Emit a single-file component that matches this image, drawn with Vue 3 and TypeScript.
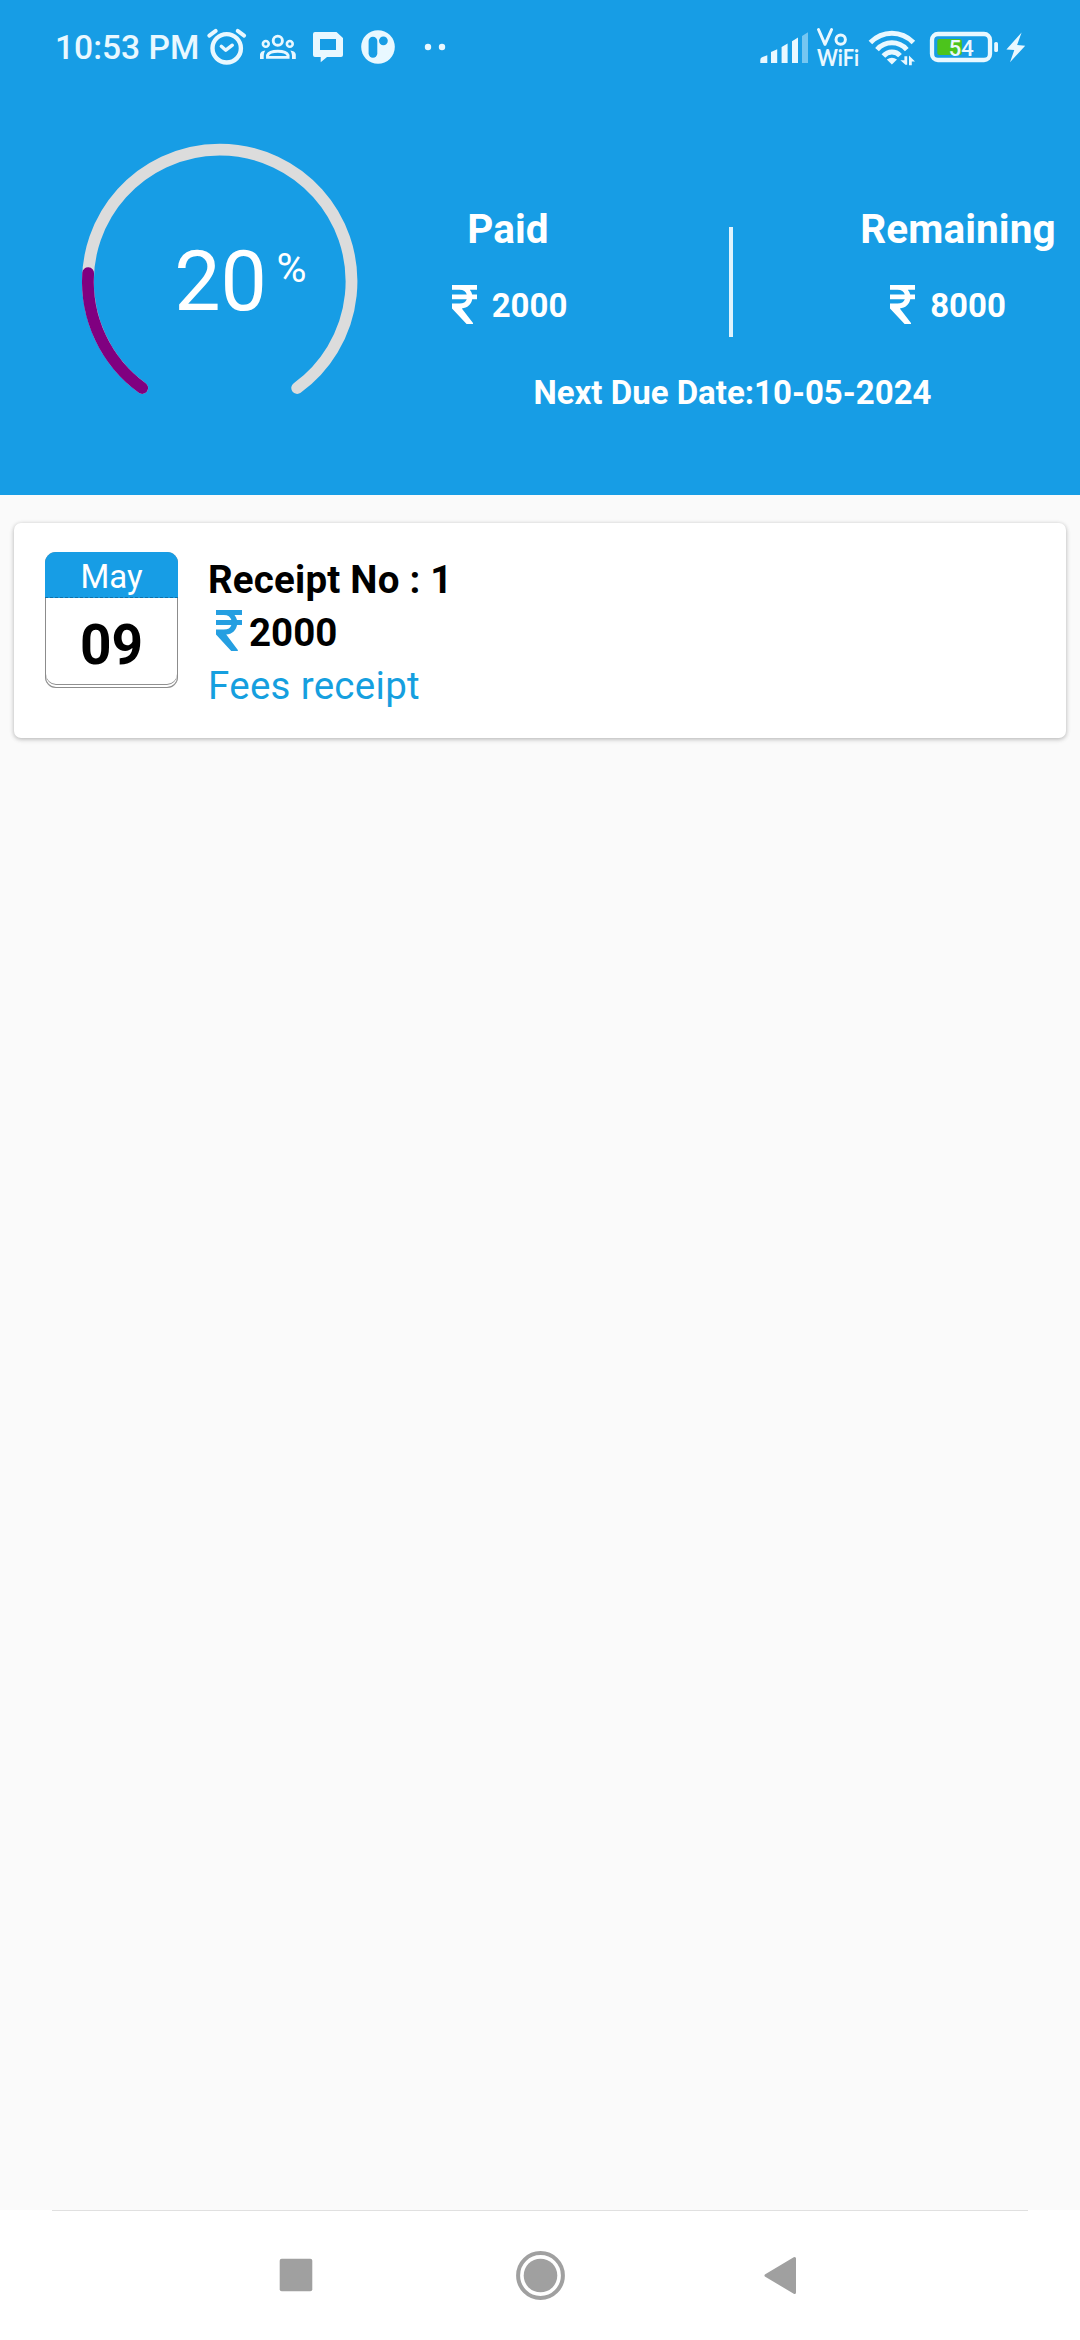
<script setup lang="ts">
interface Receipt {
  month: string
  day: string
  no: number
  amount: number
  label: string
}

const percent = 20
const nextDue = '10-05-2024'
const stats = [
  { key: 'paid', label: 'Paid', amount: 2000 },
  { key: 'remaining', label: 'Remaining', amount: 8000 },
]
const receipts: Receipt[] = [
  { month: 'May', day: '09', no: 1, amount: 2000, label: 'Fees receipt' },
]

const rupee =
  'M0 0H25V4.7H17.8C19 6.2 19.8 7.8 20.2 9.6H25V14.2H20.2C19.3 19.5 15.5 22.7 9.8 23.4L21 38V39H14.6L0 23.4V18.6H7.5C11.5 18.6 13.9 17 14.8 14.2H0V9.6H14.8C13.9 6.5 11.5 4.7 7.5 4.7H0Z'

// The gauge is open at the bottom: a 288 degree sweep starting at 126 degrees.
const gauge = { cx: 143.7, cy: 145.4, r: 131.8, start: 126, sweep: 288 }

function arc(sweep: number): string {
  const at = (deg: number): string => {
    const a = (deg * Math.PI) / 180
    return `${(gauge.cx + gauge.r * Math.cos(a)).toFixed(2)} ${(gauge.cy + gauge.r * Math.sin(a)).toFixed(2)}`
  }
  return `M${at(gauge.start)}A${gauge.r} ${gauge.r} 0 ${sweep > 180 ? 1 : 0} 1 ${at(gauge.start + sweep)}`
}
</script>

<template>
  <div class="screen">
    <header class="header">
      <div class="status">
        <span class="clock">10:53 PM</span>
        <svg class="left-icons" width="250" height="50" viewBox="204 22 250 50">
          <g fill="none" stroke="#e9f8ff" stroke-linecap="round" stroke-linejoin="round">
            <circle cx="226.7" cy="48.3" r="14.2" stroke-width="4.4" />
            <path d="M209.3 35.6L215.7 30.9M237.7 30.9L244.1 35.6" stroke-width="4" />
            <path d="M221.3 46.3L225.8 50.2L232.3 45.2" stroke-width="3.4" />
          </g>
          <g fill="none" stroke="#e9f8ff" stroke-width="2.9">
            <circle cx="277.8" cy="40.7" r="4.6" />
            <circle cx="265.8" cy="43.9" r="2.9" stroke-width="2.6" />
            <circle cx="289.8" cy="43.9" r="2.9" stroke-width="2.6" />
            <path d="M267.5 57.4V55.4Q269.2 51.2 277.8 51.2T288.1 55.4V57.4Z" />
          </g>
          <path d="M260 59V54.5Q260.4 50.8 265.3 50.4Q263.4 53 263.7 59ZM295.8 59V54.5Q295.4 50.8 290.3 50.4Q292.4 53 292 59Z" fill="#e9f8ff" />
          <path fill="#e9f8ff" fill-rule="evenodd" d="M315 32H336.5L343 38V55Q343 57 341 57H327L320.7 62.3V57H315Q313 57 313 55V34Q313 32 315 32ZM320 39V50H336V39Z" />
          <circle cx="378" cy="47" r="16.8" fill="#e9f8ff" />
          <rect x="368.6" y="36.7" width="8.7" height="21" rx="4.35" fill="#179de5" />
          <circle cx="383.4" cy="40.8" r="4.4" fill="#179de5" />
          <circle cx="428" cy="47" r="3.2" fill="#e9f8ff" />
          <circle cx="442" cy="47" r="3.2" fill="#e9f8ff" />
        </svg>
        <svg class="right-icons" width="270" height="50" viewBox="758 22 270 50">
          <g fill="#e9f8ff">
            <path d="M760.3 60Q760.3 57.7 762.5 57L767.3 55.2V63H760.3ZM771 52L777.2 49.3V63H771ZM781.6 47L787.6 43.5V63H781.6ZM792 41.3L798 37.5V63H792Z" />
            <path d="M802 36L808 32.3V63H802Z" opacity=".45" />
          </g>
          <g fill="none" stroke="#e9f8ff" stroke-width="3" stroke-linecap="round" stroke-linejoin="round">
            <circle cx="840.7" cy="39.6" r="4.7" />
            <path d="M818.5 29.5L825 44.3L831.6 29.5" />
          </g>
          <text class="wifi-text" x="817" y="66" textLength="42" lengthAdjust="spacingAndGlyphs">WiFi</text>
          <g fill="none" stroke="#e9f8ff" stroke-width="5">
            <path d="M870.4 42.6Q879.5 33.3 891.9 33.3T913.4 42.6" />
            <path d="M877 49.6Q883.2 42.8 891.9 42.8T906.8 49.6" />
            <path d="M883.4 56Q887 52 891.9 52T900 55.6" />
          </g>
          <path d="M886.8 59.6Q891.9 55.8 897 59.6L891.9 64.4Z" fill="#e9f8ff" />
          <path d="M900.4 60.2H904.4V56.2H907.2V64.8H905.4ZM909 55.6V65.2H911.8V61.4H915Z" fill="#e9f8ff" />
          <rect x="932" y="34" width="58" height="26" rx="6" fill="none" stroke="#e9f8ff" stroke-width="4.3" />
          <rect x="937.3" y="39" width="24.5" height="16" rx="2" fill="#4cc41c" />
          <text class="battery-text" x="961.3" y="55.6" text-anchor="middle">54</text>
          <rect x="994.2" y="42" width="3.8" height="10" rx="1.6" fill="#e9f8ff" />
          <path d="M1021.6 32.4L1006.4 49.6L1014.3 50L1010 62.2L1025.2 45.8L1017.1 45Z" fill="#e9f8ff" />
        </svg>
      </div>

      <div class="summary">
        <svg class="gauge" width="288" height="270" viewBox="0 0 288 270">
          <g fill="none" stroke-linecap="round" stroke-width="11.8">
            <path :d="arc(gauge.sweep)" stroke="#dcdcdc" />
            <path :d="arc((gauge.sweep * percent) / 100)" stroke="#800080" />
          </g>
          <text class="gauge-value" x="98.2" y="174">{{ percent }}</text>
          <text class="gauge-unit" x="200.6" y="145.6">%</text>
        </svg>
        <div class="figures">
          <div class="stats">
            <div v-for="s in stats" :key="s.key" class="stat" :class="s.key">
              <span class="stat-label">{{ s.label }}</span>
              <span class="stat-amount">
                <svg width="25" height="39" viewBox="0 0 25 39"><path :d="rupee" fill="#fff" /></svg>
                <span>{{ s.amount }}</span>
              </span>
            </div>
          </div>
          <div class="due">Next Due Date:{{ nextDue }}</div>
        </div>
      </div>
    </header>

    <main class="content">
      <article v-for="r in receipts" :key="r.no" class="card">
        <div class="calendar">
          <div class="month">{{ r.month }}</div>
          <div class="day">{{ r.day }}</div>
        </div>
        <div class="details">
          <div class="title">Receipt No : {{ r.no }}</div>
          <div class="amount">
            <svg width="26" height="41" viewBox="0 0 25 39" preserveAspectRatio="none">
              <path :d="rupee" fill="#259fe1" />
            </svg>
            <span>{{ r.amount }}</span>
          </div>
          <div class="label">{{ r.label }}</div>
        </div>
      </article>
    </main>

    <nav class="nav">
      <div class="nav-line"></div>
      <div class="nav-buttons">
        <svg width="60" height="60" viewBox="0 0 60 60">
          <rect x="13.7" y="13.7" width="32.6" height="32.6" rx="2" fill="#a0a0a0" />
        </svg>
        <svg width="60" height="60" viewBox="0 0 60 60">
          <circle cx="30.5" cy="30.5" r="22.4" fill="none" stroke="#a0a0a0" stroke-width="4" />
          <circle cx="30.5" cy="30.5" r="16.8" fill="#a0a0a0" />
        </svg>
        <svg width="60" height="60" viewBox="0 0 60 60">
          <path d="M12 30.5L40.5 13.6V47.4Z" fill="#a0a0a0" stroke="#a0a0a0" stroke-width="3" stroke-linejoin="round" />
        </svg>
      </div>
    </nav>
  </div>
</template>

<style>
body {
  margin: 0;
  background: #fafafa;
}
</style>

<style scoped>
.screen {
  display: flex;
  flex-direction: column;
  width: 1080px;
  height: 2340px;
  overflow: hidden;
  background: #fafafa;
  font-family: Roboto, "Noto Sans", sans-serif;
}
svg {
  display: block;
  flex: none;
}
.header {
  flex: none;
  height: 495px;
  background: #179de5;
  color: #fff;
}
.status {
  display: flex;
  align-items: center;
  box-sizing: border-box;
  height: 94px;
  padding: 0 52px 0 55px;
}
.clock {
  width: 149px;
  font-size: 33.6px;
  font-weight: 500;
  line-height: 40px;
  white-space: nowrap;
  color: #e9f8ff;
  padding-top: 2px;
}
.right-icons {
  margin-left: auto;
}
.wifi-text {
  font: 700 22.5px Lato, sans-serif;
  fill: #e9f8ff;
}
.battery-text {
  font-size: 22px;
  font-weight: 500;
  fill: #e9f8ff;
}
.summary {
  display: flex;
  padding: 42px 0 0 76px;
}
.gauge-value {
  font-size: 82.5px;
  fill: #fff;
}
.gauge-unit {
  font-size: 41px;
  fill: #fff;
}
.figures {
  flex: 1;
  padding-top: 69px;
  font-weight: 700;
}
.stats {
  display: flex;
  height: 168px;
}
.stat {
  display: flex;
  flex-direction: column;
  align-items: center;
}
.paid {
  position: relative;
  width: 288px;
  margin-right: 161px;
}
.paid::after {
  content: "";
  position: absolute;
  left: 365px;
  top: 22px;
  width: 4px;
  height: 110px;
  background: #dff3fd;
}
.remaining {
  width: 290px;
}
.stat-label {
  font-size: 40.5px;
  line-height: 49px;
  letter-spacing: 0.1px;
}
.stat-amount {
  display: flex;
  align-items: center;
  gap: 15px;
  margin-top: 30px;
  font-size: 33px;
  line-height: 39px;
  padding-left: 3px;
}
.remaining .stat-amount {
  padding: 0 20px 0 0;
}
.stat-amount span {
  padding-top: 2px;
}
.due {
  width: 737px;
  font-size: 33px;
  line-height: 40px;
  text-align: center;
}
.content {
  flex: 1;
  padding: 28px 14px 0;
}
.card {
  display: flex;
  box-sizing: border-box;
  height: 215px;
  padding: 29px 31px 0;
  border-radius: 7px;
  background: #fff;
  box-shadow: 0 1px 4px rgba(0, 0, 0, 0.25), 0 2px 6px rgba(0, 0, 0, 0.06);
}
.calendar {
  box-sizing: border-box;
  width: 133px;
  height: 136px;
  border-radius: 11px;
  overflow: hidden;
  background: #fff;
  box-shadow: inset 0 0 0 1px #8c8c8c, inset 0 -2px 0 1px #fff, inset 0 -3px 0 1px #909090;
  text-align: center;
}
.month {
  box-sizing: border-box;
  height: 46px;
  border-bottom: 1px dashed #1271a8;
  background: #179de5;
  color: #fff;
  font-size: 33px;
  line-height: 50px;
}
.day {
  font-size: 55px;
  font-weight: 700;
  line-height: 94px;
  color: #000;
}
.details {
  margin-left: 30px;
  padding-top: 1px;
  font-size: 38.5px;
  font-weight: 700;
  line-height: 53px;
  color: #000;
}
.title {
  letter-spacing: 0.2px;
}
.amount {
  display: flex;
  align-items: center;
  gap: 7px;
  height: 53px;
  padding-left: 8px;
}
.amount svg {
  margin-top: -5px;
}
.label {
  font-weight: 400;
  letter-spacing: 0.3px;
  color: #159fdf;
}
.nav {
  flex: none;
  height: 130px;
  background: #fff;
}
.nav-line {
  height: 1px;
  margin: 0 52px;
  background: #e0e0e0;
}
.nav-buttons {
  display: flex;
  justify-content: center;
  gap: 184px;
  padding-top: 34px;
}
</style>
